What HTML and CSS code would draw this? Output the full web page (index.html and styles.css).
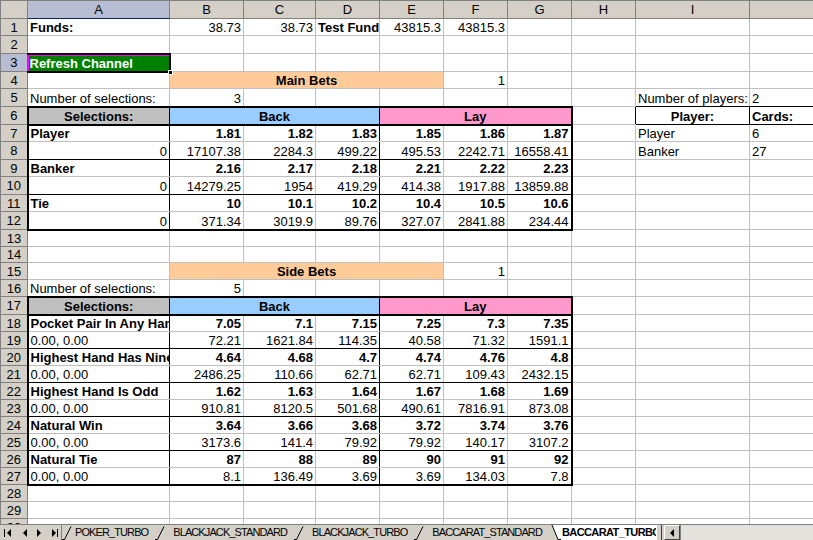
FILE: index.html
```html
<!DOCTYPE html>
<html>
<head>
<meta charset="utf-8">
<link rel="stylesheet" href="styles.css">
</head>
<body>
<div class="app">
  <div class="sheet">
    <table class="grid">
      <colgroup>
        <col class="w-rh"><col class="w-a"><col class="w-b"><col class="w-c"><col class="w-d"><col class="w-e"><col class="w-f"><col class="w-g"><col class="w-h"><col class="w-i"><col class="w-j">
      </colgroup>
      <tr class="hdr"><td class="corner"></td><td class="ch act">A</td><td class="ch">B</td><td class="ch">C</td><td class="ch">D</td><td class="ch">E</td><td class="ch">F</td><td class="ch">G</td><td class="ch">H</td><td class="ch">I</td><td class="ch"></td></tr>
      <tr class="h17"><td class="rh">1</td><td class="b">Funds:</td><td class="n">38.73</td><td class="n">38.73</td><td class="b">Test Funds:</td><td class="n">43815.3</td><td class="n">43815.3</td><td></td><td></td><td></td><td></td></tr>
      <tr class="h18"><td class="rh">2</td><td></td><td></td><td></td><td></td><td></td><td></td><td></td><td></td><td></td><td></td></tr>
      <tr class="h18"><td class="rh act">3</td><td class="sel"><span class="btn">Refresh Channel</span><i class="handle"></i></td><td></td><td></td><td></td><td></td><td></td><td></td><td></td><td></td><td></td></tr>
      <tr class="h17"><td class="rh">4</td><td></td><td colspan="4" class="peach c b">Main Bets</td><td class="n">1</td><td></td><td></td><td></td><td></td></tr>
      <tr class="h18"><td class="rh">5</td><td>Number of selections:</td><td class="n">3</td><td></td><td></td><td></td><td></td><td></td><td></td><td class="tbk">Number of players:</td><td class="tbk">2</td></tr>
      <tr class="h18"><td class="rh">6</td><td class="gray c b T B L rbk">Selections:</td><td colspan="3" class="blue c b T B rbk">Back</td><td colspan="3" class="pink c b T B R">Lay</td><td class="rbk"></td><td class="c b tbk rbk">Player:</td><td class="b tbk">Cards:</td></tr>
      <tr class="h17"><td class="rh">7</td><td class="b L rbk">Player</td><td class="n b">1.81</td><td class="n b">1.82</td><td class="n b rbk">1.83</td><td class="n b">1.85</td><td class="n b">1.86</td><td class="n b R">1.87</td><td></td><td>Player</td><td>6</td></tr>
      <tr class="h18"><td class="rh">8</td><td class="n L rbk tbk">0</td><td class="n tbk">17107.38</td><td class="n tbk">2284.3</td><td class="n tbk rbk">499.22</td><td class="n tbk">495.53</td><td class="n tbk">2242.71</td><td class="n tbk R">16558.41</td><td></td><td>Banker</td><td>27</td></tr>
      <tr class="h17"><td class="rh">9</td><td class="b L rbk">Banker</td><td class="n b">2.16</td><td class="n b">2.17</td><td class="n b rbk">2.18</td><td class="n b">2.21</td><td class="n b">2.22</td><td class="n b R">2.23</td><td></td><td></td><td></td></tr>
      <tr class="h18"><td class="rh">10</td><td class="n L rbk tbk">0</td><td class="n tbk">14279.25</td><td class="n tbk">1954</td><td class="n tbk rbk">419.29</td><td class="n tbk">414.38</td><td class="n tbk">1917.88</td><td class="n tbk R">13859.88</td><td></td><td></td><td></td></tr>
      <tr class="h17"><td class="rh">11</td><td class="b L rbk">Tie</td><td class="n b">10</td><td class="n b">10.1</td><td class="n b rbk">10.2</td><td class="n b">10.4</td><td class="n b">10.5</td><td class="n b R">10.6</td><td></td><td></td><td></td></tr>
      <tr class="h18"><td class="rh">12</td><td class="n L rbk B">0</td><td class="n B">371.34</td><td class="n B">3019.9</td><td class="n B rbk">89.76</td><td class="n B">327.07</td><td class="n B">2841.88</td><td class="n B R">234.44</td><td></td><td></td><td></td></tr>
      <tr class="h17"><td class="rh">13</td><td></td><td></td><td></td><td></td><td></td><td></td><td></td><td></td><td></td><td></td></tr>
      <tr class="h16"><td class="rh">14</td><td></td><td></td><td></td><td></td><td></td><td></td><td></td><td></td><td></td><td></td></tr>
      <tr class="h17"><td class="rh">15</td><td></td><td colspan="4" class="peach c b">Side Bets</td><td class="n">1</td><td></td><td></td><td></td><td></td></tr>
      <tr class="h17"><td class="rh">16</td><td>Number of selections:</td><td class="n">5</td><td></td><td></td><td></td><td></td><td></td><td></td><td></td><td></td></tr>
      <tr class="h18"><td class="rh">17</td><td class="gray c b T B L rbk">Selections:</td><td colspan="3" class="blue c b T B rbk">Back</td><td colspan="3" class="pink c b T B R">Lay</td><td></td><td></td><td></td></tr>
      <tr class="h17"><td class="rh">18</td><td class="b L rbk">Pocket Pair In Any Hand</td><td class="n b">7.05</td><td class="n b">7.1</td><td class="n b rbk">7.15</td><td class="n b">7.25</td><td class="n b">7.3</td><td class="n b R">7.35</td><td></td><td></td><td></td></tr>
      <tr class="h17"><td class="rh">19</td><td class="L rbk tbk">0.00, 0.00</td><td class="n tbk">72.21</td><td class="n tbk">1621.84</td><td class="n tbk rbk">114.35</td><td class="n tbk">40.58</td><td class="n tbk">71.32</td><td class="n tbk R">1591.1</td><td></td><td></td><td></td></tr>
      <tr class="h17"><td class="rh">20</td><td class="b L rbk">Highest Hand Has Nine</td><td class="n b">4.64</td><td class="n b">4.68</td><td class="n b rbk">4.7</td><td class="n b">4.74</td><td class="n b">4.76</td><td class="n b R">4.8</td><td></td><td></td><td></td></tr>
      <tr class="h17"><td class="rh">21</td><td class="L rbk tbk">0.00, 0.00</td><td class="n tbk">2486.25</td><td class="n tbk">110.66</td><td class="n tbk rbk">62.71</td><td class="n tbk">62.71</td><td class="n tbk">109.43</td><td class="n tbk R">2432.15</td><td></td><td></td><td></td></tr>
      <tr class="h17"><td class="rh">22</td><td class="b L rbk">Highest Hand Is Odd</td><td class="n b">1.62</td><td class="n b">1.63</td><td class="n b rbk">1.64</td><td class="n b">1.67</td><td class="n b">1.68</td><td class="n b R">1.69</td><td></td><td></td><td></td></tr>
      <tr class="h17"><td class="rh">23</td><td class="L rbk tbk">0.00, 0.00</td><td class="n tbk">910.81</td><td class="n tbk">8120.5</td><td class="n tbk rbk">501.68</td><td class="n tbk">490.61</td><td class="n tbk">7816.91</td><td class="n tbk R">873.08</td><td></td><td></td><td></td></tr>
      <tr class="h17"><td class="rh">24</td><td class="b L rbk">Natural Win</td><td class="n b">3.64</td><td class="n b">3.66</td><td class="n b rbk">3.68</td><td class="n b">3.72</td><td class="n b">3.74</td><td class="n b R">3.76</td><td></td><td></td><td></td></tr>
      <tr class="h17"><td class="rh">25</td><td class="L rbk tbk">0.00, 0.00</td><td class="n tbk">3173.6</td><td class="n tbk">141.4</td><td class="n tbk rbk">79.92</td><td class="n tbk">79.92</td><td class="n tbk">140.17</td><td class="n tbk R">3107.2</td><td></td><td></td><td></td></tr>
      <tr class="h17"><td class="rh">26</td><td class="b L rbk">Natural Tie</td><td class="n b">87</td><td class="n b">88</td><td class="n b rbk">89</td><td class="n b">90</td><td class="n b">91</td><td class="n b R">92</td><td></td><td></td><td></td></tr>
      <tr class="h17"><td class="rh">27</td><td class="L rbk B">0.00, 0.00</td><td class="n B">8.1</td><td class="n B">136.49</td><td class="n B rbk">3.69</td><td class="n B">3.69</td><td class="n B">134.03</td><td class="n B R">7.8</td><td></td><td></td><td></td></tr>
      <tr class="h17"><td class="rh">28</td><td></td><td></td><td></td><td></td><td></td><td></td><td></td><td></td><td></td><td></td></tr>
      <tr class="h17"><td class="rh">29</td><td></td><td></td><td></td><td></td><td></td><td></td><td></td><td></td><td></td><td></td></tr>
      <tr class="h17"><td class="rh">30</td><td></td><td></td><td></td><td></td><td></td><td></td><td></td><td></td><td></td><td></td></tr>
    </table>
  </div>
  <div class="tabbar">
    <div class="nav">
      <svg width="62" height="15" viewBox="0 0 62 15">
        <rect x="4" y="4" width="1" height="8" fill="#000"/>
        <polygon points="11,4 11,12 7,8" fill="#000"/>
        <polygon points="27,4 27,12 23,8" fill="#000"/>
        <polygon points="37,4 37,12 41,8" fill="#000"/>
        <polygon points="52,4 52,12 56,8" fill="#000"/>
        <rect x="57" y="4" width="1" height="8" fill="#000"/>
      </svg>
    </div>
    <div class="tabs">
      <div class="tab"><svg class="slash" width="12" height="15" viewBox="0 0 12 15"><path d="M0 14.5 H2.5 L9 1.5" fill="none" stroke="#000" stroke-width="1"/></svg><span class="label">POKER_TURBO</span></div>
      <div class="tab"><svg class="slash" width="12" height="15" viewBox="0 0 12 15"><path d="M0 14.5 H2.5 L9 1.5" fill="none" stroke="#000" stroke-width="1"/></svg><span class="label">BLACKJACK_STANDARD</span></div>
      <div class="tab"><svg class="slash" width="12" height="15" viewBox="0 0 12 15"><path d="M0 14.5 H2.5 L9 1.5" fill="none" stroke="#000" stroke-width="1"/></svg><span class="label">BLACKJACK_TURBO</span></div>
      <div class="tab"><svg class="slash" width="12" height="15" viewBox="0 0 12 15"><path d="M0 14.5 H2.5 L9 1.5" fill="none" stroke="#000" stroke-width="1"/></svg><span class="label">BACCARAT_STANDARD</span></div>
      <div class="tab active"><svg class="slash" width="12" height="15" viewBox="0 0 12 15"><polygon points="3,0 12,0 12,15 9,15" fill="#fff"/><path d="M3 0 L9 14.5 H12" fill="none" stroke="#000" stroke-width="1"/></svg><span class="label">BACCARAT_TURBO</span></div>
    </div>
    <div class="split"></div>
    <div class="sbtn"><svg width="8" height="8" viewBox="0 0 8 8"><polygon points="6,0 6,8 2,4" fill="#000"/></svg></div>
    <div class="track"></div>
  </div>
</div>
</body>
</html>
```
FILE: styles.css
```css
html, body { margin: 0; padding: 0; }
body {
  width: 813px;
  height: 540px;
  overflow: hidden;
  background: #fff;
  font-family: "Liberation Sans", Arial, sans-serif;
  font-size: 13px;
  color: #000;
}
.app { display: flex; flex-direction: column; height: 540px; }
.sheet { height: 524px; overflow: hidden; flex: none; }

.grid { border-collapse: collapse; table-layout: fixed; width: 899px; }
.w-rh { width: 27px; }
.w-a { width: 142px; }
.w-b { width: 74px; }
.w-c { width: 72px; }
.w-d, .w-e, .w-f, .w-g, .w-h { width: 64px; }
.w-i { width: 114px; }
.w-j { width: 150px; }

.grid td {
  border: 1px solid #c0c0c0;
  padding: 0 2px;
  white-space: nowrap;
  overflow: hidden;
  vertical-align: bottom;
  line-height: 15px;
}
.hdr { height: 18px; }
.h16 { height: 16px; }
.h17 { height: 17px; }
.h18 { height: 18px; }

.grid td.corner, .grid td.ch, .grid td.rh {
  background: #d4d0c8;
  border: 1px solid #808080;
  text-align: center;
  vertical-align: middle;
  padding: 0;
}
.grid td.act { background: #b6bdd2; }
.grid td.ch.act { border-bottom-color: #0a246a; }
.grid td.rh.act { border-right-color: #0a246a; }

.n { text-align: right; }
.c { text-align: center; }
.b { font-weight: bold; }

.peach { background: #ffcc99; }
.blue { background: #99ccff; }
.pink { background: #ff99cc; }
.gray { background: #c0c0c0; }

.grid td.tbk { border-bottom: 1px solid #000; }
.grid td.rbk { border-right: 1px solid #000; }
.grid td.T { border-top: 2px solid #000; }
.grid td.B { border-bottom: 2px solid #000; }
.grid td.L { border-left: 2px solid #000; }
.grid td.R { border-right: 2px solid #000; }

.grid td.sel {
  position: relative;
  overflow: visible;
  background: #008000;
  border-top: 2px solid #000;
  border-right: 2px solid #000;
  border-bottom: 2px solid #000;
  border-left: 2px solid #ff00ff;
  box-shadow: inset 0 1px 0 #ff00ff;
  padding-left: 1px;
}
.btn { color: #fff; font-weight: bold; }
.handle {
  position: absolute;
  right: -4px;
  bottom: -4px;
  width: 5px;
  height: 5px;
  background: #000;
  border: 1px solid #fff;
  box-sizing: border-box;
}

.tabbar {
  flex: none;
  height: 16px;
  display: flex;
  background: #d4d0c8;
  border-top: 1px solid #808080;
  box-sizing: border-box;
  font-size: 11px;
}
.nav { width: 62px; flex: none; border-right: 1px solid #808080; box-sizing: border-box; }
.nav svg { display: block; }
.tabs {
  width: 594px;
  flex: none;
  display: flex;
  overflow: hidden;
  white-space: nowrap;
}
.tab { display: flex; align-items: center; flex: none; }
.slash { display: block; flex: none; }
.label {
  padding: 0 7px 0 6px;
  letter-spacing: -0.9px;
  line-height: 15px;
}
.tab:first-child .label { padding-left: 1px; }
.tab.active { background: transparent; }
.tab.active .label { background: #fff; font-weight: bold; padding-left: 1px; letter-spacing: -0.6px; }
.split {
  width: 4px;
  flex: none;
  background: #d4d0c8;
  border-left: 1px solid #fff;
  border-right: 1px solid #404040;
}
.sbtn {
  width: 16px;
  flex: none;
  margin-left: 2px;
  display: flex;
  align-items: center;
  justify-content: center;
  background: #d4d0c8;
  border-top: 1px solid #fff;
  border-left: 1px solid #fff;
  border-right: 1px solid #404040;
  border-bottom: 1px solid #404040;
  box-sizing: border-box;
}
.track { flex: 1; background: #e4e2dc; border-left: 1px solid #808080; }
```
